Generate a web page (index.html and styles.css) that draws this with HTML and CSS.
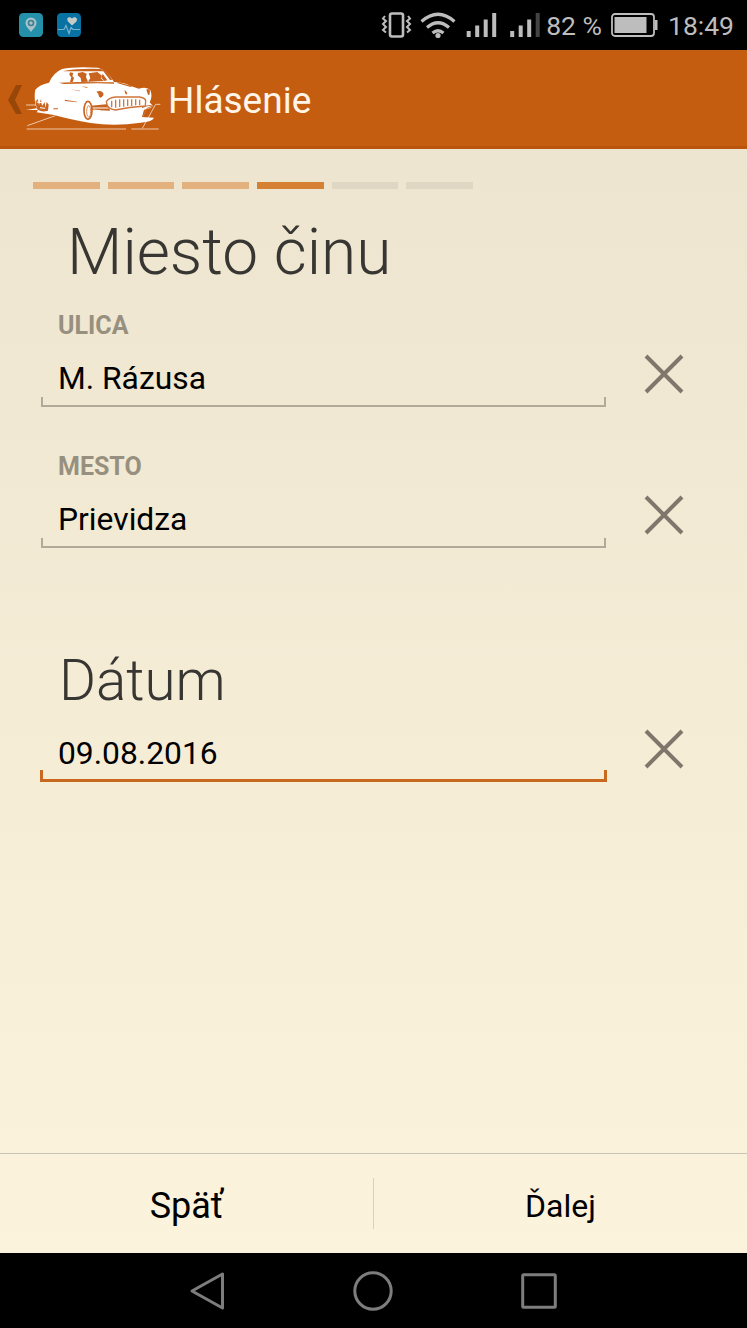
FILE: index.html
```html
<!DOCTYPE html>
<html lang="sk">
<head>
  <meta charset="UTF-8" />
  <title>Hlásenie</title>
  <link rel="stylesheet" href="styles.css">
</head>
<body>
  <div class="statusbar">
    <svg class="app-icon" width="24" height="24" viewBox="0 0 24 24">
      <rect width="24" height="24" rx="4.5" fill="#2590a9" />
      <path d="M12 19C9 15 6.500 13 6.500 10a5.500 5.500 0 0 1 11 0C17.500 13 15 15 12 19z" fill="#a9c2c8" />
      <circle cx="12" cy="10" r="2.500" fill="#a9c2c8" stroke="#397f91" stroke-width="1.600" />
    </svg>
    <svg class="app-icon" width="24" height="24" viewBox="0 0 24 24">
      <rect width="24" height="24" rx="4.500" fill="#0872a3" />
      <path d="M15 12.500L11 8.500C8.500 4.500 13 3 15 5.500C17 3 21.500 4.500 19.500 8.500z" fill="#c7cbc7" />
      <path d="M1 16.500h6l2-4 3 8 2-6 2 2h7" fill="none" stroke="#78b4cf" stroke-width="1.200" />
    </svg>
    <div class="status-right">
      <svg width="165" height="30" viewBox="0 0 165 30" fill="none" stroke="#bdbdbd">
        <rect x="10" y="3.500" width="13" height="23" rx="2" stroke-width="2.600" />
        <path d="M5 6l-2 2.500 3 2.500-3 3 3 3-3 3 3 2.500M28 6l2 2.500-3 2.500 3 3-3 3 3 3-3 2.500" stroke-width="2" />
        <path d="M41.500 11.500q16.500-14.500 33 0M47 17.500q11-9.500 22 0M52.500 23q5.500-4.500 11 0" stroke-width="3.200" />
        <circle cx="58" cy="25.500" r="2.600" fill="#bdbdbd" stroke="none" />
        <path d="M88.700 21v6M97.200 15.500V27M105.700 9.500V27M114.200 3v24M132.200 21v6M140.700 15.500V27M149.200 9.500V27" stroke-width="4" />
        <path d="M157.700 3v24" stroke="#444" stroke-width="4" />
      </svg>
      <span class="percent">82 %</span>
      <svg class="battery" width="47" height="24" viewBox="0 0 47 24">
        <rect x="1" y="1" width="42" height="22" rx="3" fill="none" stroke="#bdbdbd" stroke-width="1.800" />
        <rect x="3.500" y="4" width="32" height="16" fill="#bdbdbd" />
        <path d="M44 7h2.500v10H44z" fill="#bdbdbd" />
      </svg>
      <span class="clock">18:49</span>
    </div>
  </div>

  <header class="appbar">
    <svg class="back" width="14" height="30" viewBox="0 0 14 30">
      <path d="M8 0h6L7 15l7 14H8L0 15z" fill="#984708" />
    </svg>
    <svg class="logo" width="137" height="68" viewBox="70 45 411 204">
      <!-- ground lines -->
      <g fill="none" stroke="#eec8aa" stroke-width="3">
        <path d="M76 168h34M78 240h298M392 240h82M80 230l84-30M425 238l40-72h14" />
      </g>
      <!-- body -->
      <path fill="#fff" d="M104 122Q116 107 145 101Q157 72 184 60Q218 52 292 56Q318 62 340 99Q374 101 390 111L414 119Q440 112 449 124Q457 143 447 160L456 170Q454 178 430 182L424 204L460 206Q456 218 420 221Q340 233 270 222Q210 212 160 198L108 190L112 183H76L108 178L104 166Q100 140 104 122z" />
      <g fill="#c86420">
        <path d="M188 66Q230 58 300 60Q320 64 335 92L328 93 308 67H190z" />
        <path d="M208 70l10 2-3 9 5 6-4 12h-8l4-14-6-8zM232 72l14-3 12 5-2 10 6 14-20 1-2-12-9-8z" />
        <path d="M264 73L290 69 304 80 300 88 310 96 262 98 269 87z" />
        <path d="M306 74l14 20-9 2-9-10z" />
        <path d="M174 101l56-2 110 1v4l-50-1-100 2z" />
        <path d="M287 128q14-6 21 4q2 10-8 14q-7-1-6-7q0-6-7-11z" />
        <path d="M372 122l8 10-3 5-4-5zM437 122q9-5 11 5l-2 12q-6-2-6-8z" />
        <path d="M192 152l37 6v2l-36-4zM158 178h14v3h-14zM208 121l30 4v2zM242 112l18 2v3zM350 99l44 12-4 3-39-11z" />
        <path d="M104 158l7-8 4 18 6-18 3 21 8-12 2 18 4-18 6 8-2 18q-20 6-33-4z" />
        <path d="M270 170l54-5 4 20-54-2z" />
      </g>
      <path d="M108 159l22 3M118 176l15 2M272 177h52M278 183l22 2" stroke="#fff" stroke-width="3" />
      <ellipse cx="262" cy="184" rx="12" ry="27" fill="#fff" stroke="#c86420" stroke-width="5" />
      <ellipse cx="264" cy="187" rx="6" ry="17" fill="none" stroke="#d98b57" stroke-width="3" />
      <!-- grille -->
      <path d="M317 158Q325 145 345 144H416Q431 146 435 154L434 171Q385 174 344 183Q319 181 317 158z" fill="#fff" stroke="#cf7438" stroke-width="4" />
      <path d="M333 155v20M345 152v24M357 151v23M369 151v22M381 151v20M393 151v20M405 151v18M417 152v17" stroke="#d17940" stroke-width="4" />
      <path d="M424 176l20-7 11 2-17 8-12 25" fill="none" stroke="#cf7438" stroke-width="3" />
    </svg>
    <h1>Hlásenie</h1>
  </header>

  <main>
    <div class="steps">
      <i class="done"></i><i class="done"></i><i class="done"></i><i class="current"></i><i></i><i></i>
    </div>

    <h2 class="place">Miesto činu</h2>
    <label for="street">ULICA</label>
    <div class="row">
      <div class="field"><input type="text" id="street" value="M. Rázusa" /></div>
      <button class="clear"><svg width="40" height="40" viewBox="0 0 40 40"><path d="M2 2l36 36M38 2L2 38" /></svg></button>
    </div>
    <label for="city">MESTO</label>
    <div class="row">
      <div class="field"><input type="text" id="city" value="Prievidza" /></div>
      <button class="clear"><svg width="40" height="40" viewBox="0 0 40 40"><path d="M2 2l36 36M38 2L2 38" /></svg></button>
    </div>

    <h2 class="date">Dátum</h2>
    <div class="row">
      <div class="field active"><input type="text" id="date" value="09.08.2016" /></div>
      <button class="clear"><svg width="40" height="40" viewBox="0 0 40 40"><path d="M2 2l36 36M38 2L2 38" /></svg></button>
    </div>
  </main>

  <footer>
    <button class="prev">Späť</button>
    <button class="next">Ďalej</button>
  </footer>

  <nav>
    <svg width="36" height="40" viewBox="0 0 36 40"><path d="M33.500 3v34L3 20z" /></svg>
    <svg width="40" height="40" viewBox="0 0 40 40"><circle cx="20" cy="20" r="18.200" /></svg>
    <svg width="36" height="40" viewBox="0 0 36 40"><rect x="1.700" y="3.700" width="32.600" height="32.600" rx="1" /></svg>
  </nav>
</body>
</html>
```
FILE: styles.css
```css
* {
  box-sizing: border-box;
}

body {
  margin: 0;
  height: 1328px;
  display: flex;
  flex-direction: column;
  overflow: hidden;
  font-family: Roboto, sans-serif;
  background: linear-gradient(#ede5cf 150px, #fcf3dc 1253px);
}

svg {
  display: block;
  flex: none;
}

.statusbar {
  height: 50px;
  padding-left: 19px;
  display: flex;
  align-items: center;
  background: #000;
  color: #bdbdbd;
  font-size: 26.5px;
}

.app-icon {
  margin-right: 14px;
}

.status-right {
  margin-left: auto;
  padding-right: 13px;
  display: flex;
  align-items: center;
}

.percent {
  margin-left: 1px;
}

.battery {
  margin: 0 10px 0 9px;
}

.appbar {
  height: 99px;
  padding-left: 9px;
  display: flex;
  align-items: center;
  background: #c55d11;
  border-bottom: 3px solid #b9550f;
}

.back {
  margin: 3px 0 0 -1px;
}

.logo {
  margin-left: 2px;
}

h1 {
  margin: 5px 0 0 7px;
  font-size: 37px;
  font-weight: 400;
  color: #fff5e9;
}

main {
  flex: 1;
  padding: 33px 33px 0;
}

.steps {
  display: flex;
  gap: 8.1px;
}

.steps i {
  width: 66.6px;
  height: 7px;
  background: #dfd7c3;
}

.steps .done {
  background: #e3b17e;
}

.steps .current {
  background: #d58032;
}

h2 {
  margin: 0;
  font-weight: 300;
  color: #383632;
}

.place {
  margin: 26px 0 20px 34px;
  font-size: 64px;
  line-height: 76px;
}

.date {
  margin: 98px 0 18px 26px;
  font-size: 56.5px;
  line-height: 70px;
}

label {
  display: block;
  margin-left: 25px;
  font-size: 25px;
  line-height: 30px;
  font-weight: 700;
  color: #979080;
}

.row {
  display: flex;
  align-items: flex-start;
  margin: 18px 0 45px 8px;
}

.field {
  width: 565px;
  height: 48px;
  position: relative;
}

/* bracket shaped underline */
.field::after {
  content: "";
  position: absolute;
  left: 0;
  right: 0;
  bottom: 0;
  height: 8px;
  border: 2px solid #b1aa99;
  border-top: none;
  pointer-events: none;
}

.field.active::after {
  left: -1px;
  right: -1px;
  height: 9px;
  border: 3px solid #c9681f;
  border-top: none;
}

input {
  display: block;
  width: 100%;
  height: 38px;
  padding: 0 17px;
  border: none;
  outline: none;
  background: none;
  font: 31.8px Roboto, sans-serif;
  color: #000;
}

button {
  padding: 0;
  border: none;
  background: none;
  font-family: inherit;
  color: #000;
}

.clear {
  margin: -5px 0 0 38px;
}

.clear path {
  fill: none;
  stroke: #7f776c;
  stroke-width: 4;
}

footer {
  height: 100px;
  padding: 24px 0;
  display: flex;
  border-top: 1px solid #c9c4ba;
}

footer button {
  flex: 1;
  padding-top: 5px;
}

.prev {
  border-right: 1px solid #d9d1bf;
  font-size: 36px;
}

.next {
  font-size: 32px;
}

nav {
  height: 75px;
  padding-right: 1px;
  display: flex;
  justify-content: center;
  align-items: center;
  gap: 128px;
  background: #000;
}

nav svg {
  fill: none;
  stroke: #7d7d7d;
  stroke-width: 3;
  stroke-linejoin: round;
}
```
